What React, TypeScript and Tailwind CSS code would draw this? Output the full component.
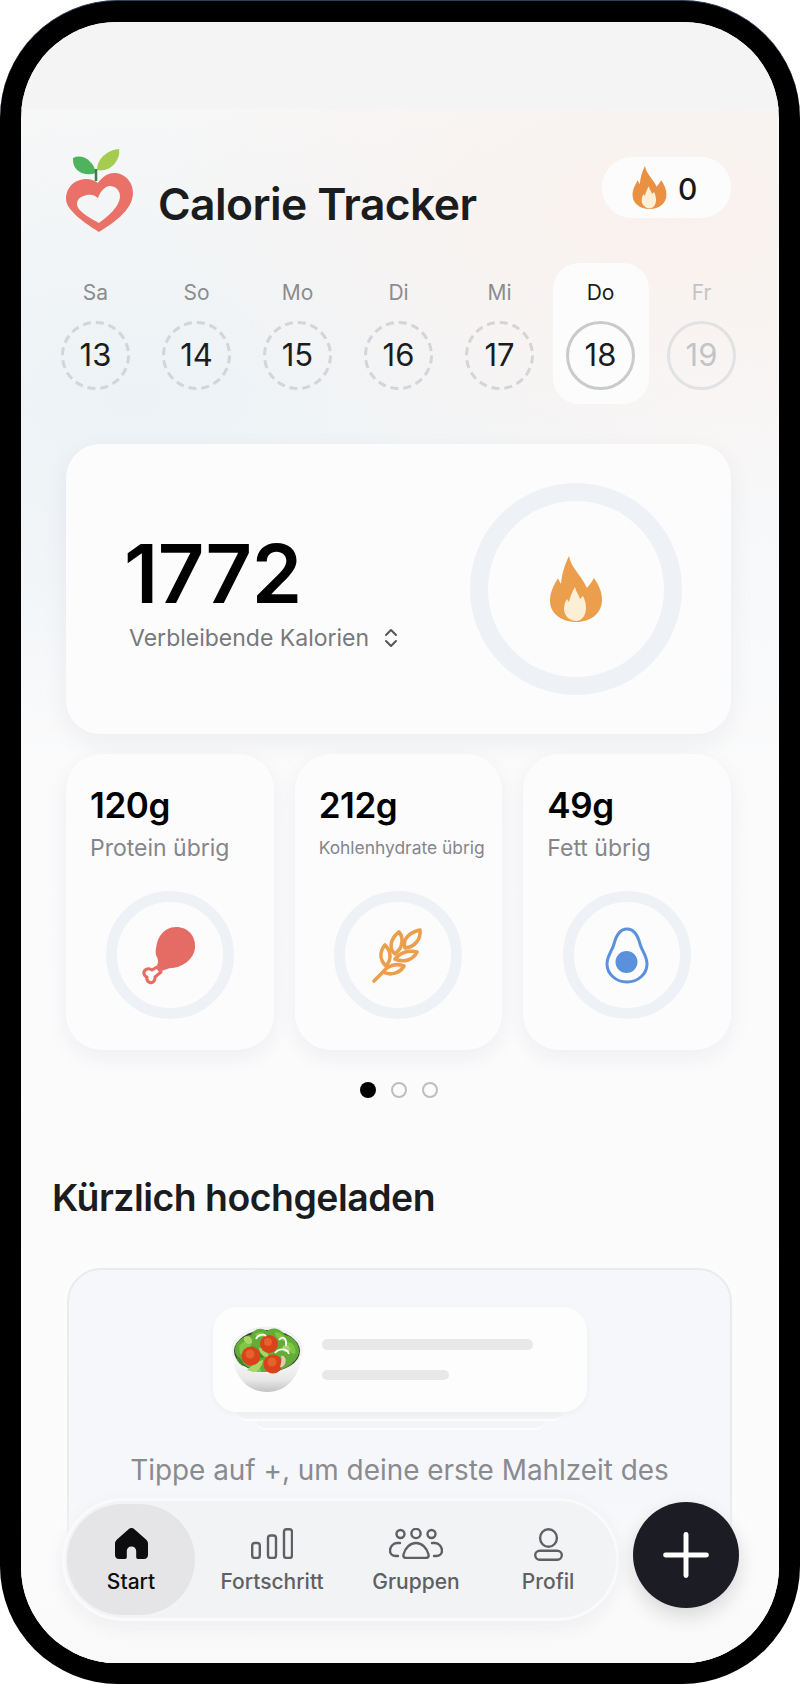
import React from 'react';
import { ChevronsUpDown, Plus } from 'lucide-react';

const DAYS = [
  { label: 'Sa', num: 13, state: 'open' },
  { label: 'So', num: 14, state: 'open' },
  { label: 'Mo', num: 15, state: 'open' },
  { label: 'Di', num: 16, state: 'open' },
  { label: 'Mi', num: 17, state: 'open' },
  { label: 'Do', num: 18, state: 'today' },
  { label: 'Fr', num: 19, state: 'future' },
];

function Flame({ className, body = '#eb9e4c' }: { className: string; body?: string }) {
  return (
    <svg viewBox="0 0 52 66" className={className}>
      <path fill={body} d="M19 0C21 12 32 20 37 32C39 29 42 26 44 22C49 29 52 36 52 44C52 57 41 66 26 66C11 66 0 57 0 45C0 36 4 29 8 22C9 25 10 26 11 28C12 17 15 8 19 0Z" />
      <path fill="#fdeed6" d="M25 31C26 36 29 39 30 43L33 40C35 44 36 48 36 52C36 59 32 65 26 65C20 65 14 60 14 53C14 49 15 46 17 43L19 46C20 41 22 36 25 31Z" />
    </svg>
  );
}

function AppLogo() {
  return (
    <svg viewBox="0 0 80 90" className="w-[80px] h-[90px] shrink-0">
      <path fill="#ea7167" fillRule="evenodd" d="M38 38C33 34 26 33 20 35C10 38 6 46 6 54C6 66 28 80 39 87C50 80 73 66 73 48C73 36 64 28 54 28C48 28 42 32 38 38ZM38 53C35 50 31 49 27 50C21 51 17 54 17 59C17 66 30 73 39 78C47 72 60 62 60 51C60 45 55 41 50 41C45 41 40 47 38 53Z" />
      <path fill="#4fb35e" d="M13 13C23 8 34 17 36 28C24 32 12 26 13 13Z" />
      <path fill="#a6cc4f" d="M37 25C37 14 47 5 59 4C61 15 50 28 37 25Z" />
      <path stroke="#3c7d4c" strokeWidth="2.5" fill="none" d="M36 24L36 36" />
    </svg>
  );
}

function Drumstick() {
  return (
    <svg viewBox="0 0 60 62" className="w-[60px] h-[62px]">
      <path fill="#e56c64" d="M36 3C48 3 56 12 55 24C54 34 44 43 32 44C28 44 25 46 22 47L17 41C19 38 18 35 16 31C15 25 17 17 20 12C24 6 30 3 36 3Z" />
      <path fill="none" stroke="#e56c64" strokeWidth="3" strokeLinejoin="round" d="M17 43L12 46C8 43 3 46 4 50C5 52 6 53 7 53C6 57 10 60 13 58C15 57 15 55 15 53L21 48Z" />
    </svg>
  );
}

function WheatEar() {
  return (
    <svg viewBox="0 0 54 58" className="w-[54px] h-[58px]" fill="none" stroke="#eb9e4c" strokeWidth="3.6" strokeLinejoin="round" strokeLinecap="round">
      <path d="M34 22C31 12 40 6 49 4C50 13 44 21 34 22Z" />
      <path d="M24 28C17 22 20 12 28 6C33 12 32 22 24 28Z" />
      <path d="M24 33C30 26 38 24 46 26C42 34 33 37 24 33Z" />
      <path d="M15 40C8 33 9 25 14 19C20 25 21 33 15 40Z" />
      <path d="M12 46C17 39 26 37 33 40C29 47 20 50 12 46Z" />
      <path d="M3 55C8 50 10 48 12 46" />
    </svg>
  );
}

function Avocado() {
  return (
    <svg viewBox="0 0 44 57" className="w-[44px] h-[57px]">
      <path fill="none" stroke="#5b90dc" strokeWidth="3" d="M22 2C30 2 33 9 35 17C37 24 42 29 42 37C42 47 33 55 22 55C11 55 2 47 2 37C2 29 7 24 9 17C11 9 14 2 22 2Z" />
      <circle cx="21.5" cy="35" r="11" fill="#5b90dc" />
    </svg>
  );
}

function SaladBowl() {
  return (
    <svg viewBox="0 0 72 68" className="w-[72px] h-[68px] shrink-0">
      <defs>
        <linearGradient id="bowl" x1="0" y1="0" x2="0" y2="1">
          <stop offset="0" stopColor="#ffffff" />
          <stop offset="0.7" stopColor="#e8e8e8" />
          <stop offset="1" stopColor="#c4c4c4" />
        </linearGradient>
      </defs>
      <path fill="url(#bowl)" d="M1 24C1 44 12 66 36 66C60 66 71 44 71 24Z" />
      <ellipse cx="36" cy="24" rx="35.5" ry="23.5" fill="#f2f2f2" />
      <ellipse cx="36" cy="25" rx="33" ry="21" fill="#3a3f35" />
      <path fill="#62ad37" d="M4 26C3 16 12 10 20 9C24 2 30 1 36 5C42 0 50 3 54 9C62 10 69 18 68 27C65 37 53 46 36 46C20 46 7 37 4 26Z" />
      <path fill="#7fc546" d="M8 20C12 14 18 14 20 18C20 24 14 30 9 28ZM24 8C30 5 34 6 34 9C32 12 26 12 24 8ZM44 6C50 6 54 10 54 14C50 16 44 12 44 6ZM56 16C62 16 66 22 64 28C60 28 56 24 56 16ZM26 40C28 42 34 46 28 46C24 46 22 44 26 40Z" />
      <path fill="#3f8a27" d="M6 30C10 32 14 38 12 40C8 38 5 34 6 30ZM28 24C32 26 34 30 32 32C28 32 26 28 28 24ZM54 30C56 34 52 40 48 42C48 38 50 32 54 30Z" />
      <path fill="#a7d664" d="M13 11C18 9 22 12 21 17C17 20 12 16 13 11ZM52 20C56 18 60 20 59 25C55 28 50 25 52 20ZM16 44C22 38 30 34 32 34C32 40 26 47 22 46ZM28 22C32 20 38 28 38 31C34 32 28 28 28 22Z" />
      <circle cx="20" cy="30" r="9.5" fill="#d8431b" />
      <circle cx="38" cy="18" r="9" fill="#d8431b" />
      <circle cx="42" cy="38" r="9.5" fill="#d8431b" />
      <circle cx="19" cy="28" r="4.5" fill="#e5622c" />
      <circle cx="37" cy="16" r="4" fill="#e5622c" />
      <circle cx="41" cy="36" r="4.5" fill="#e5622c" />
      <path fill="none" stroke="#ffffff" strokeWidth="1.8" d="M25 13C27 8 33 8 35 10M48 14C51 10 56 11 55 20M44 27C48 22 56 22 58 28" />
      <path fill="#e5c9b0" d="M50 30C54 29 56 33 54 38C52 41 50 42 49 41C50 37 51 34 50 30Z" />
    </svg>
  );
}

function HomeIcon() {
  return (
    <svg viewBox="0 0 33 31" className="w-[33px] h-[31px]">
      <path fill="#0d0d0f" d="M16.5 0C17.6 0 18.6.5 19.4 1.2L31 11.5C32.3 12.7 33 14 33 15.8V27C33 29.3 31.7 31 29 31H23C21.8 31 21.2 30.2 21.2 29V23C21.2 20.4 19.2 18.5 16.5 18.5C13.8 18.5 11.8 20.4 11.8 23V29C11.8 30.2 11.2 31 10 31H4C1.3 31 0 29.3 0 27V15.8C0 14 .7 12.7 2 11.5L13.6 1.2C14.4.5 15.4 0 16.5 0Z" />
    </svg>
  );
}

function BarsIcon() {
  return (
    <svg viewBox="0 0 42 31" className="w-[42px] h-[31px]" fill="none" stroke="#5f6064" strokeWidth="2.4">
      <rect x="1.2" y="15" width="7.6" height="15" rx="2.6" />
      <rect x="17" y="7.5" width="8" height="22.5" rx="2.6" />
      <rect x="33" y="1.2" width="8" height="28.8" rx="2.6" />
    </svg>
  );
}

function GroupIcon() {
  return (
    <svg viewBox="0 0 54 31" className="w-[54px] h-[31px]" fill="none" stroke="#5f6064" strokeWidth="2.4" strokeLinecap="round">
      <circle cx="11.5" cy="6" r="4" />
      <circle cx="27" cy="5.5" r="4.6" />
      <circle cx="42.5" cy="6" r="4" />
      <path d="M17 30H37C39 30 40 28.5 39.5 26.5C38 20 33 15 27 15C21 15 16 20 14.5 26.5C14 28.5 15 30 17 30Z" />
      <path d="M11 15H8C4 15 1 19 1 22.5C1 25.5 3 28 7 28H9" />
      <path d="M43 15H46C50 15 53 19 53 22.5C53 25.5 51 28 47 28H45" />
    </svg>
  );
}

function PersonIcon() {
  return (
    <svg viewBox="0 0 29 33" className="w-[29px] h-[33px]" fill="none" stroke="#5f6064" strokeWidth="2.4">
      <ellipse cx="14.5" cy="10" rx="8.4" ry="8.8" />
      <rect x="1.2" y="22.8" width="26.6" height="9" rx="4.5" />
    </svg>
  );
}

function MacroCard({ amount, label, labelCls, icon }: { amount: string; label: string; labelCls: string; icon: React.ReactNode }) {
  return (
    <div className="h-[296px] rounded-[36px] bg-[#fcfcfd] pt-[31px] shadow-[0_8px_22px_rgba(30,40,60,0.06)]">
      <div className="pl-[24px] text-[35px] leading-[40px] font-semibold tracking-[-0.4px] text-black">{amount}</div>
      <div className={`pl-[24px] h-[36px] leading-[36px] mt-[5px] text-[#85868a] ${labelCls}`}>{label}</div>
      <div className="mx-auto mt-[25px] w-[128px] h-[128px] rounded-full border-[11px] border-[#eef2f6] flex items-center justify-center">
        {icon}
      </div>
    </div>
  );
}

function DashedRing({ children }: { children: React.ReactNode }) {
  return (
    <div className="relative mt-[14px] w-[69px] h-[69px] flex items-center justify-center text-[31px] text-[#1b1c20]">
      <svg viewBox="0 0 69 69" className="absolute inset-0 w-[69px] h-[69px]">
        <circle cx="34.5" cy="34.5" r="33" fill="none" stroke="#d4d5d8" strokeWidth="3" strokeDasharray="8 4.96" />
      </svg>
      {children}
    </div>
  );
}

export default function App() {
  return (
    <div className="w-[800px] h-[1684px] bg-white font-['Inter',sans-serif]">
      {/* device bezel */}
      <div className="h-full rounded-[118px] bg-black p-[21px] border-t border-[#2c3e5c]">
        <div className="relative h-full rounded-[96px] overflow-hidden bg-[radial-gradient(ellipse_520px_300px_at_85%_12%,#f9f1ee_0%,rgba(249,241,238,0)_100%),radial-gradient(ellipse_560px_340px_at_15%_23%,#ecf2f6_0%,rgba(236,242,246,0)_100%),linear-gradient(180deg,#f9f8f7_0%,#f7f8f9_30%,#fbfbfc_50%,#fcfcfd_100%)]">
          <div className="h-[87px] bg-[#f5f4f4]" />

          {/* Header */}
          <div className="mt-[36px] h-[90px] pl-[39px] pr-[48px] flex items-start">
            <AppLogo />
            <h1 className="ml-[18px] mt-[32px] text-[44.4px] leading-[54px] font-semibold tracking-[-0.6px] text-[#1b1c20]">Calorie Tracker</h1>
            <div className="ml-auto mt-[12px] w-[129px] h-[61px] rounded-[30px] bg-[#fcfcfc] flex items-center pl-[30px] gap-[11px]">
              <Flame className="w-[35px] h-[43px]" body="#ea9043" />
              <span className="mt-[3px] text-[30px] font-medium text-[#17181c]">0</span>
            </div>
          </div>

          {/* Week strip */}
          <div className="mt-[28px] pl-[24px] pr-[27px] grid grid-cols-7">
            {DAYS.map(d => (
              <div key={d.num} className="flex justify-center">
                <div className={`w-[96px] h-[141px] rounded-[26px] flex flex-col items-center pt-[16px] ${d.state === 'today' ? 'bg-[#fcfcfc]' : ''}`}>
                  <div className={`h-[28px] leading-[28px] text-[21px] ${d.state === 'today' ? 'text-[#1b1c20]' : d.state === 'future' ? 'text-[#c3c4c7]' : 'text-[#8b8c90]'}`}>{d.label}</div>
                  {d.state === 'open' ? (
                    <DashedRing>{d.num}</DashedRing>
                  ) : (
                    <div className={`mt-[14px] w-[69px] h-[69px] rounded-full flex items-center justify-center text-[31px] border-[3px] ${d.state === 'today' ? 'border-[#c9cacc] text-[#1b1c20]' : 'border-[#e1e2e4] text-[#c3c4c7]'}`}>
                      {d.num}
                    </div>
                  )}
                </div>
              </div>
            ))}
          </div>

          {/* Calories card */}
          <div className="mt-[40px] ml-[45px] mr-[48px] h-[290px] rounded-[34px] bg-[#fcfcfd] shadow-[0_8px_26px_rgba(30,40,60,0.06)] flex items-center pl-[58px] pr-[49px]">
            <div className="mt-[3px]">
              <div className="text-[81px] leading-[94px] font-semibold tracking-[-0.5px] text-black">1772</div>
              <div className="pl-[5px] flex items-center gap-[10px] text-[23px] leading-[34px] text-[#77787c]">
                Verbleibende Kalorien
                <ChevronsUpDown size={24} strokeWidth={2} className="text-[#55565a]" />
              </div>
            </div>
            <div className="ml-auto w-[212px] h-[212px] rounded-full border-[18px] border-[#eef2f6] flex items-center justify-center">
              <Flame className="w-[52px] h-[66px]" />
            </div>
          </div>

          {/* Macro cards */}
          <div className="mt-[20px] ml-[45px] mr-[48px] grid grid-cols-3 gap-[21px]">
            <MacroCard amount="120g" label="Protein übrig" labelCls="text-[23px]" icon={<Drumstick />} />
            <MacroCard amount="212g" label="Kohlenhydrate übrig" labelCls="text-[17.4px]" icon={<WheatEar />} />
            <MacroCard amount="49g" label="Fett übrig" labelCls="text-[23px]" icon={<Avocado />} />
          </div>

          {/* Pager dots */}
          <div className="mt-[32px] pr-[3px] flex justify-center gap-[15px]">
            <span className="w-[16px] h-[16px] rounded-full bg-black" />
            <span className="w-[16px] h-[16px] rounded-full border-2 border-[#bdbec0]" />
            <span className="w-[16px] h-[16px] rounded-full border-2 border-[#bdbec0]" />
          </div>

          <h2 className="mt-[77px] pl-[31px] text-[37.4px] leading-[46px] font-semibold tracking-[-0.5px] text-[#1b1c20]">Kürzlich hochgeladen</h2>

          {/* Empty state */}
          <div className="mt-[47px] ml-[46px] mr-[47px] h-[400px] rounded-[34px] border-2 border-[#e9ebee] bg-[#f6f7fa] pt-[37px] flex flex-col items-center">
            <div className="relative w-[374px]">
              <div className="h-[105px] rounded-[24px] bg-[#fdfdfd] flex items-center pl-[18px] gap-[19px] relative z-10 shadow-[0_2px_6px_rgba(30,40,60,0.04)]">
                <SaladBowl />
                <div className="flex flex-col gap-[20px]">
                  <div className="w-[211px] h-[11px] rounded-full bg-[#e8e8e9]" />
                  <div className="w-[127px] h-[10px] rounded-full bg-[#e8e8e9]" />
                </div>
              </div>
              <div className="mx-[24px] h-[9px] rounded-b-[10px] bg-[#f3f4f7] border-b-2 border-[#fdfdfe]" />
              <div className="mx-[43px] h-[9px] rounded-b-[10px] bg-[#f3f4f7] border-b-2 border-[#fdfdfe]" />
            </div>
            <p className="mt-[22px] text-[27.9px] leading-[36px] text-[#8a8b8f] whitespace-nowrap">Tippe auf +, um deine erste Mahlzeit des</p>
          </div>

          {/* Fade behind the tab bar */}
          <div className="absolute left-0 right-0 bottom-0 h-[170px] bg-[linear-gradient(180deg,rgba(252,252,253,0)_0%,#fbfbfc_45%,#f9f9f9_100%)]" />

          {/* Tab bar */}
          <div className="absolute left-[41px] bottom-[42px] w-[557px] h-[123px] rounded-[62px] border-[3px] border-[#fafafb] bg-[#f2f3f5] flex items-center shadow-[0_6px_20px_rgba(30,40,60,0.06)]">
            <div className="ml-[2px] w-[128px] h-[111px] rounded-[56px] bg-[#e5e5e7] flex flex-col items-center justify-center gap-[10px] pt-[2px]">
              <HomeIcon />
              <span className="text-[21px] leading-[25px] font-medium text-[#0d0d0f]">Start</span>
            </div>
            <div className="w-[154px] pt-[2px] flex flex-col items-center gap-[10px]">
              <BarsIcon />
              <span className="text-[21px] leading-[25px] font-medium text-[#5f6064]">Fortschritt</span>
            </div>
            <div className="w-[134px] pt-[2px] flex flex-col items-center gap-[10px]">
              <GroupIcon />
              <span className="text-[21px] leading-[25px] font-medium text-[#5f6064]">Gruppen</span>
            </div>
            <div className="w-[130px] pt-[2px] flex flex-col items-center gap-[8px]">
              <PersonIcon />
              <span className="text-[21px] leading-[25px] font-medium text-[#5f6064]">Profil</span>
            </div>
          </div>

          <div className="absolute left-[612px] bottom-[55px] w-[106px] h-[106px] rounded-full bg-[#1c1c24] flex items-center justify-center shadow-[0_8px_20px_rgba(20,20,30,0.15)]">
            <Plus size={70} strokeWidth={1.7} className="text-white" />
          </div>
        </div>
      </div>
    </div>
  );
}
